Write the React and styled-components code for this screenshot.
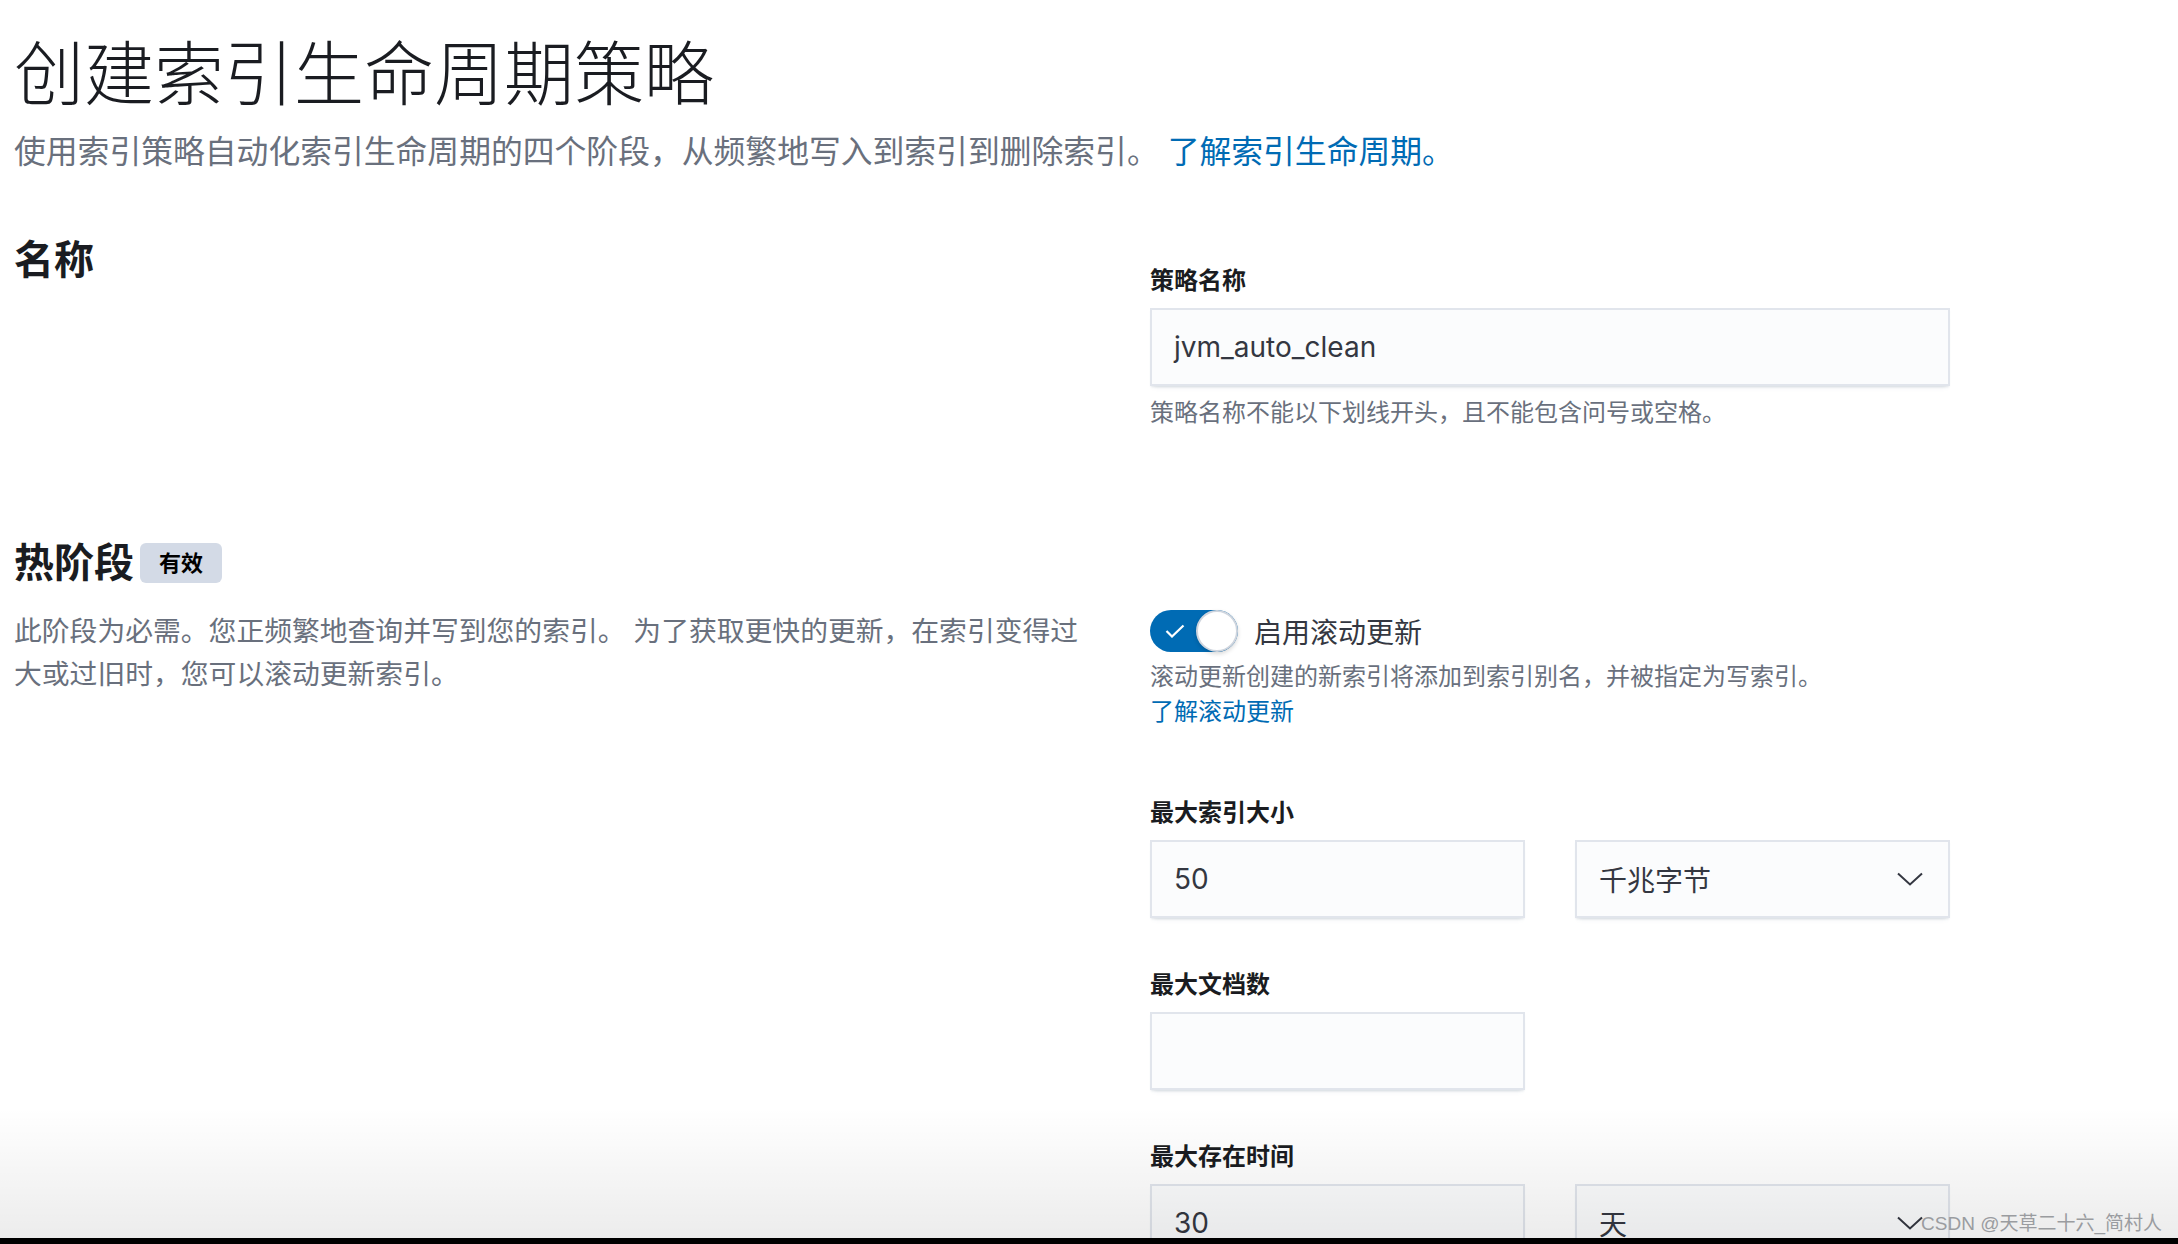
import React from "react"
import styled, { createGlobalStyle } from "styled-components"

const GlobalStyle = createGlobalStyle`
  html, body {
    margin: 0;
    padding: 0;
    background: #fff;
  }
  body {
    font-family: Inter, "Noto Sans CJK SC", sans-serif;
  }
`

const Page = styled.div`
  position: relative;
  box-sizing: border-box;
  height: 1244px;
  overflow: hidden;
  padding: 33px 0 0 14px;
`

const Title = styled.h1`
  margin: 0;
  font-size: 70px;
  line-height: 84px;
  font-weight: 200;
  color: #1a1c21;
`

const Subtitle = styled.p`
  margin: 11px 0 0;
  font-size: 31.8px;
  line-height: 48px;
  color: #69707d;
`

const Link = styled.a`
  color: #006bb4;
  text-decoration: none;
  display: ${(p) => (p.block ? "block" : "inline")};
  font-size: ${(p) => p.size || "inherit"};
  line-height: ${(p) => p.lh || "inherit"};
`

const Row = styled.section`
  display: grid;
  grid-template-columns: 1080px 800px;
  column-gap: 56px;
  align-items: start;
  margin-top: ${(p) => p.top}px;
`

const SectionTitle = styled.h2`
  margin: ${(p) => p.top || 0}px 0 0;
  display: flex;
  align-items: center;
  gap: 6px;
  font-size: 40px;
  line-height: 50px;
  font-weight: 700;
  color: #1a1c21;
`

const Badge = styled.span`
  display: inline-block;
  height: 40px;
  line-height: 40px;
  padding: 0 19px;
  border-radius: 6px;
  background: #d3dae6;
  color: #000;
  font-size: 22px;
  font-weight: 700;
`

const Fields = styled.div`
  display: flex;
  flex-direction: column;
  padding-top: ${(p) => p.top || 0}px;
`

const FieldGroup = styled.div`
  display: flex;
  flex-direction: column;
  margin-top: ${(p) => p.top || 0}px;
`

const Label = styled.label`
  font-size: 24px;
  line-height: 34px;
  font-weight: 700;
  color: #1a1c21;
  margin-bottom: 10px;
`

const InputRow = styled.div`
  display: flex;
  gap: 50px;
`

const Box = styled.div`
  box-sizing: border-box;
  width: ${(p) => p.w}px;
  height: 78px;
  padding: 0 27px 0 24px;
  display: flex;
  align-items: center;
  justify-content: space-between;
  background: #fbfcfd;
  box-shadow: inset 0 0 0 2px #e1e5ec, 0 2px 2px -1px rgba(152, 162, 179, 0.25),
    0 5px 4px -4px rgba(152, 162, 179, 0.25);
  font-size: 28px;
  color: #343741;
`

const Help = styled.div`
  margin-top: ${(p) => p.top || 9}px;
  font-size: 24px;
  line-height: 35px;
  color: #69707d;
`

const Description = styled.p`
  margin: 0;
  font-size: 27.8px;
  line-height: 43px;
  color: #69707d;
`

const SwitchRow = styled.div`
  display: flex;
  align-items: center;
  gap: 16px;
  height: 42px;
`

const Track = styled.div`
  box-sizing: border-box;
  width: 88px;
  height: 42px;
  border-radius: 21px;
  background: #006bb4;
  display: flex;
  align-items: center;
  justify-content: space-between;
  padding-left: 15px;
`

const Thumb = styled.div`
  box-sizing: border-box;
  width: 42px;
  height: 42px;
  border-radius: 50%;
  background: #fff;
  border: 2px solid #cfd5de;
  box-shadow: 0 2px 4px rgba(0, 0, 0, 0.15);
`

const SwitchLabel = styled.span`
  font-size: 28px;
  color: #343741;
`

const Fade = styled.div`
  position: absolute;
  left: 0;
  right: 0;
  bottom: 6px;
  height: 130px;
  background: linear-gradient(to bottom, rgba(0, 0, 0, 0), rgba(0, 0, 0, 0.075));
  pointer-events: none;
`

const BlackBar = styled.div`
  position: absolute;
  left: 0;
  right: 0;
  bottom: 0;
  height: 6px;
  background: #000;
`

const Watermark = styled.div`
  position: absolute;
  right: 16px;
  bottom: 8px;
  font-family: "Liberation Sans", "Noto Sans CJK SC", sans-serif;
  font-size: 19px;
  line-height: 24px;
  color: #9a9ca0;
`

function Chevron() {
  return (
    <svg width="26" height="14" viewBox="0 0 26 14" fill="none">
      <polyline points="1,1.5 13,12.5 25,1.5" stroke="#343741" strokeWidth="2" />
    </svg>
  )
}

function Check() {
  return (
    <svg width="20" height="14" viewBox="0 0 20 14" fill="none">
      <polyline points="1.5,7 7,12.5 18.5,1.5" stroke="#fff" strokeWidth="2.2" />
    </svg>
  )
}

export default function App() {
  return (
    <>
      <GlobalStyle />
      <Page>
        <Title>创建索引生命周期策略</Title>
        <Subtitle>
          使用索引策略自动化索引生命周期的四个阶段，从频繁地写入到索引到删除索引。{" "}
          <Link href="#">了解索引生命周期。</Link>
        </Subtitle>

        <Row top={59}>
          <SectionTitle>名称</SectionTitle>
          <Fields top={29}>
            <Label>策略名称</Label>
            <Box w={800}>jvm_auto_clean</Box>
            <Help>策略名称不能以下划线开头，且不能包含问号或空格。</Help>
          </Fields>
        </Row>

        <SectionTitle top={108}>
          热阶段 <Badge>有效</Badge>
        </SectionTitle>

        <Row top={22}>
          <Description>
            此阶段为必需。您正频繁地查询并写到您的索引。 为了获取更快的更新，在索引变得过大或过旧时，您可以滚动更新索引。
          </Description>
          <Fields>
            <SwitchRow>
              <Track>
                <Check />
                <Thumb />
              </Track>
              <SwitchLabel>启用滚动更新</SwitchLabel>
            </SwitchRow>
            <Help top={7}>滚动更新创建的新索引将添加到索引别名，并被指定为写索引。</Help>
            <Link href="#" block size="24px" lh="35px">
              了解滚动更新
            </Link>

            <FieldGroup top={67}>
              <Label>最大索引大小</Label>
              <InputRow>
                <Box w={375}>50</Box>
                <Box w={375}>
                  千兆字节
                  <Chevron />
                </Box>
              </InputRow>
            </FieldGroup>

            <FieldGroup top={50}>
              <Label>最大文档数</Label>
              <Box w={375} />
            </FieldGroup>

            <FieldGroup top={50}>
              <Label>最大存在时间</Label>
              <InputRow>
                <Box w={375}>30</Box>
                <Box w={375}>
                  天
                  <Chevron />
                </Box>
              </InputRow>
            </FieldGroup>
          </Fields>
        </Row>

        <Fade />
        <Watermark>CSDN @天草二十六_简村人</Watermark>
        <BlackBar />
      </Page>
    </>
  )
}
